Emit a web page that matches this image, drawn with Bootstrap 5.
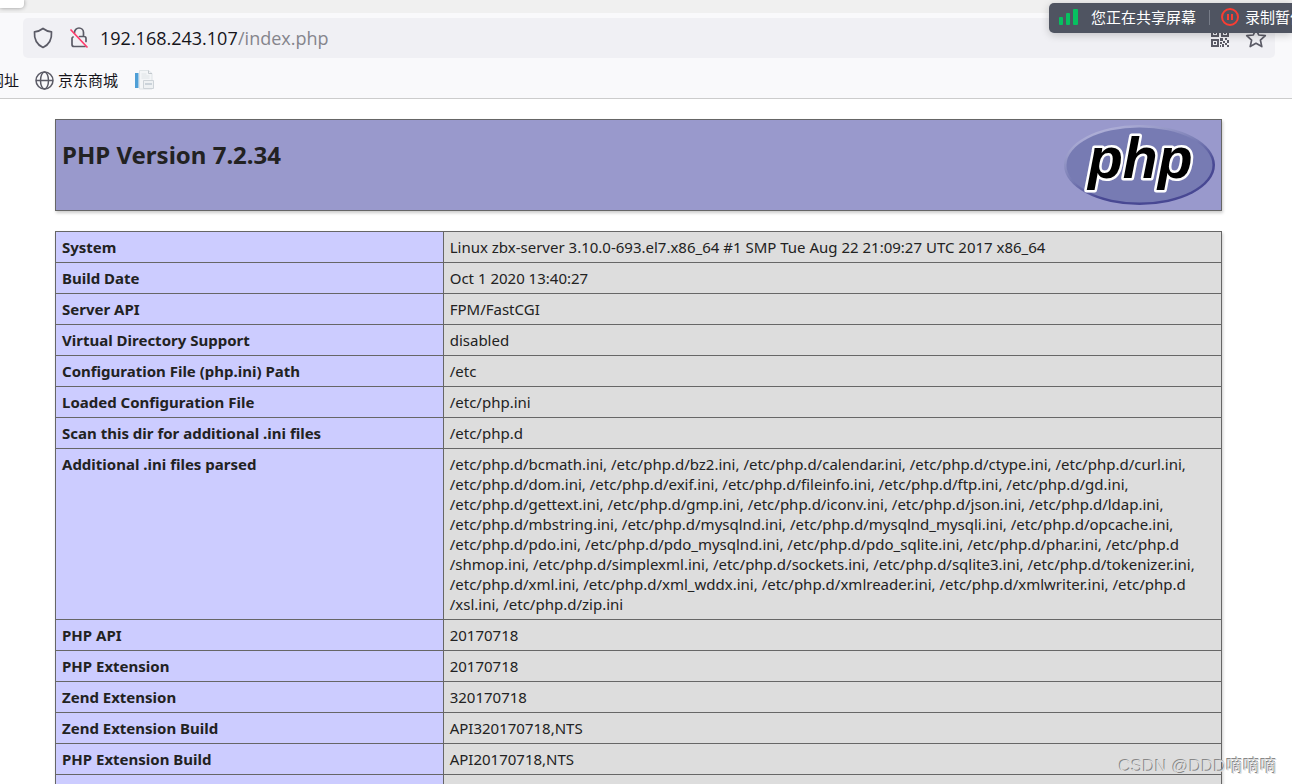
<!DOCTYPE html>
<html lang="en">
<head>
<meta charset="utf-8">
<meta name="viewport" content="width=device-width, initial-scale=1">
<title>phpinfo()</title>
<link rel="stylesheet" href="https://cdn.jsdelivr.net/npm/bootstrap@5.3.0/dist/css/bootstrap.min.css">
<style>
body{font-family:"Noto Sans","Noto Sans CJK SC",sans-serif;font-size:15px;line-height:20px;color:#222;background:#fff}
svg{display:block;flex:none}
.tab-strip{height:13px;background:#f0f0f0}
.tab-active{width:24px;height:8px;background:#fff;border-bottom-right-radius:4px;box-shadow:0 0 4px rgba(0,0,0,.4)}
.browser-bar{background:#f9f9fb;border-bottom:1px solid #ccc;height:86px;color:#15141a}
.address{height:40px;background:#f0f0f4;border-radius:5px;margin:5px 17px 0 23px;padding:0 8px 0 9px;color:#5b5b66}
.address input{border:0;padding:0;background:none;font-family:"Open Sans","Noto Sans",sans-serif;font-size:18px;line-height:24px;outline:0}
.address .url{margin-left:12px}
.address .star{margin-left:16px}
.host{width:138px;color:#15141a}
.path{color:#85858c}
.bookmarks{height:24px;margin-top:10px;font-family:"Noto Sans CJK SC",sans-serif}
.bookmarks a,.bookmarks a:hover{color:#15141a}
.cut-left{width:19px;overflow:hidden}
.share-pill{top:3px;left:1049px;right:0;height:30px;overflow:hidden;background:#4f5461;border-radius:5px 0 0 5px;box-shadow:0 2px 8px rgba(0,0,0,.2);color:#fff;font-family:"Noto Sans CJK SC",sans-serif;padding:0 0 2px 10px}
.share-pill .label-main{margin-left:12px}
.share-pill .label-rec{margin-left:6px}
.share-sep{width:1px;height:15px;background:#777c88;margin:0 11px 0 13px;flex:none}
.info{padding:20px 70px 0 55px}
.php-head{height:92px;background:#99c;border:1px solid #666;box-shadow:1px 2px 3px #ccc;padding:5px 6px}
.php-head h1{font-size:24px;line-height:32px;font-weight:700;margin:14px 0 0}
.php-info{margin-top:20px;border-collapse:collapse;table-layout:fixed;box-shadow:1px 2px 3px #ccc}
.php-info th,.php-info td{border:1px solid #666;padding:5px 6px;vertical-align:baseline;white-space:nowrap}
.php-info th{width:33.25%;background:#ccf;font-weight:700}
.php-info td{background:#ddd}
.php-info tr:last-child th{height:31px}
.watermark{right:15px;bottom:7px;font-family:"Liberation Sans","Noto Sans CJK SC",sans-serif;font-size:17px;line-height:20px;color:#ddd;text-shadow:-1px -1px 0 #888}
</style>
<script src="https://cdn.jsdelivr.net/npm/bootstrap@5.3.0/dist/js/bootstrap.bundle.min.js"></script>
</head>
<body class="vh-100 overflow-hidden position-relative">
<div class="tab-strip"><div class="tab-active"></div></div>
<header class="browser-bar overflow-hidden">
  <form class="address d-flex align-items-center">
    <svg width="22" height="22" viewBox="0 0 22 22" fill="none" stroke="#5b5b66" stroke-width="1.7" stroke-linejoin="round"><path d="M11 1.500C8.500 3.500 5.500 4.500 2.500 4.800C2 12 4.500 17.500 11 20.500C17.500 17.500 20 12 19.500 4.800C16.500 4.500 13.500 3.500 11 1.500Z"/></svg>
    <svg class="ms-3" width="18" height="22" viewBox="0 0 18 22" fill="none" stroke-width="1.7" stroke-linecap="round"><path d="M4.500 6V5.500a4.500 4.500 0 0 1 9 0V9.500M9.500 9.500H14a2 2 0 0 1 2 2v3M3 10a1.500 1.500 0 0 0-1 1.500V17.500a2 2 0 0 0 2 2h11" stroke="#5b5b66"/><path d="M1 3L17 20" stroke="#ff3b6b"/></svg>
    <div class="url d-flex flex-grow-1">
      <input class="host" type="text" value="192.168.243.107" aria-label="Host"><input class="path flex-grow-1" type="text" value="/index.php" aria-label="Path">
    </div>
    <svg width="18" height="18" viewBox="0 0 18 18" fill="#5b5b66"><path fill-rule="evenodd" d="M0 0h8v8H0zM2 2v4h4V2zM10 0h8v8h-8zM12 2v4h4V2zM0 10h8v8H0zM2 12v4h4v-4z"/><path d="M3 3h2v2H3zM13 3h2v2h-2zM3 13h2v2H3zM9 9h3v3H9zM14 9h2v2h-2zM12 12h2v2h-2zM16 11h2v3h-2zM9 13h2v2H9zM14 14h2v2h-2zM11 15h2v3h-2zM16 16h2v2h-2zM9 16h1v2H9z"/></svg>
    <svg class="star" width="22" height="22" viewBox="0 0 22 22" fill="none" stroke="#5b5b66" stroke-width="1.7" stroke-linejoin="round"><path d="M11 2l2.700 6 6.600.7-4.900 4.400 1.400 6.500L11 16.300 5.200 19.600l1.400-6.500L1.700 8.700l6.600-.7z"/></svg>
  </form>
  <nav class="bookmarks d-flex align-items-center">
    <a href="#" class="cut-left d-flex justify-content-end text-nowrap text-decoration-none">网址</a>
    <a href="#" class="d-flex align-items-center text-decoration-none ms-3">
      <svg width="19" height="19" viewBox="0 0 19 19" fill="none" stroke="#5b5b66" stroke-width="1.500"><circle cx="9.500" cy="9.500" r="8.500"/><ellipse cx="9.500" cy="9.500" rx="4" ry="8.500"/><path d="M1 9.500h17"/></svg>
      <span class="ms-1">京东商城</span></a>
    <a href="#" class="ms-3" aria-label="Bookmark">
      <svg width="20" height="20" viewBox="0 0 20 20"><path d="M1 3h3.500v15H1z" fill="#4f9fd6"/><path d="M5.500.5h9l3.500 3V19H5.500z" fill="#f3f5f7" stroke="#dfe4e7"/><path d="M14.500.5v3H18" fill="none" stroke="#c3c9ce"/><path d="M7.500 4h5M7.500 6h8M7.500 8h8" stroke="#dfe4e7"/><path d="M9.500 10.500h10v8h-10z" fill="#eef1f3" stroke="#cdd3d8"/><path d="M11 13h7v2h-7z" fill="#cbd3da"/></svg></a>
  </nav>
</header>

<main class="info">
  <div class="php-head d-flex justify-content-between align-items-start">
    <h1>PHP Version 7.2.34</h1>
    <svg width="151" height="80" viewBox="0 0 151 80" role="img" aria-label="PHP logo">
      <defs><linearGradient id="rim" x1="0.2" y1="0" x2=".8" y2="1"><stop offset="0" stop-color="#b8b8dd"/><stop offset=".45" stop-color="#777bb3"/><stop offset=".7" stop-color="#484893"/><stop offset="1" stop-color="#484893"/></linearGradient></defs>
      <ellipse cx="75.500" cy="40" rx="75.500" ry="40" fill="url(#rim)"/><ellipse cx="75.500" cy="40" rx="73" ry="37.500" fill="#777bb3"/>
      <g font-family="Liberation Sans" font-weight="700" font-style="italic" font-size="57" stroke-linejoin="round"><text x="24" y="53" fill="#000" stroke="#fff" stroke-width="5" paint-order="stroke">php</text></g>
    </svg>
  </div>
  <table class="php-info w-100">
    <tbody>
    <tr><th scope="row">System</th><td>Linux zbx-server 3.10.0-693.el7.x86_64 #1 SMP Tue Aug 22 21:09:27 UTC 2017 x86_64</td></tr>
    <tr><th scope="row">Build Date</th><td>Oct 1 2020 13:40:27</td></tr>
    <tr><th scope="row">Server API</th><td>FPM/FastCGI</td></tr>
    <tr><th scope="row">Virtual Directory Support</th><td>disabled</td></tr>
    <tr><th scope="row">Configuration File (php.ini) Path</th><td>/etc</td></tr>
    <tr><th scope="row">Loaded Configuration File</th><td>/etc/php.ini</td></tr>
    <tr><th scope="row">Scan this dir for additional .ini files</th><td>/etc/php.d</td></tr>
    <tr><th scope="row">Additional .ini files parsed</th><td>/etc/php.d/bcmath.ini, /etc/php.d/bz2.ini, /etc/php.d/calendar.ini, /etc/php.d/ctype.ini, /etc/php.d/curl.ini,<br>/etc/php.d/dom.ini, /etc/php.d/exif.ini, /etc/php.d/fileinfo.ini, /etc/php.d/ftp.ini, /etc/php.d/gd.ini,<br>/etc/php.d/gettext.ini, /etc/php.d/gmp.ini, /etc/php.d/iconv.ini, /etc/php.d/json.ini, /etc/php.d/ldap.ini,<br>/etc/php.d/mbstring.ini, /etc/php.d/mysqlnd.ini, /etc/php.d/mysqlnd_mysqli.ini, /etc/php.d/opcache.ini,<br>/etc/php.d/pdo.ini, /etc/php.d/pdo_mysqlnd.ini, /etc/php.d/pdo_sqlite.ini, /etc/php.d/phar.ini, /etc/php.d<br>/shmop.ini, /etc/php.d/simplexml.ini, /etc/php.d/sockets.ini, /etc/php.d/sqlite3.ini, /etc/php.d/tokenizer.ini,<br>/etc/php.d/xml.ini, /etc/php.d/xml_wddx.ini, /etc/php.d/xmlreader.ini, /etc/php.d/xmlwriter.ini, /etc/php.d<br>/xsl.ini, /etc/php.d/zip.ini</td></tr>
    <tr><th scope="row">PHP API</th><td>20170718</td></tr>
    <tr><th scope="row">PHP Extension</th><td>20170718</td></tr>
    <tr><th scope="row">Zend Extension</th><td>320170718</td></tr>
    <tr><th scope="row">Zend Extension Build</th><td>API320170718,NTS</td></tr>
    <tr><th scope="row">PHP Extension Build</th><td>API20170718,NTS</td></tr>
    <tr><th scope="row"></th><td></td></tr>
    </tbody>
  </table>
</main>

<div class="share-pill position-absolute d-flex align-items-center text-nowrap">
  <svg width="20" height="16" viewBox="0 0 20 16" fill="#07c160"><rect x="0" y="8" width="4" height="8" rx="1"/><rect x="7" y="4" width="4" height="12" rx="1"/><rect x="14" y="0" width="5" height="16" rx="1"/></svg>
  <span class="label-main">您正在共享屏幕</span>
  <span class="share-sep"></span>
  <svg width="18" height="18" viewBox="0 0 18 18" fill="none" stroke="#fa3d32" stroke-width="2"><circle cx="9" cy="9" r="8"/><path d="M7 6v6M11 6v6"/></svg>
  <span class="label-rec">录制暂停</span>
</div>
<div class="watermark position-absolute">CSDN @DDD嘀嘀嘀</div>
</body>
</html>
